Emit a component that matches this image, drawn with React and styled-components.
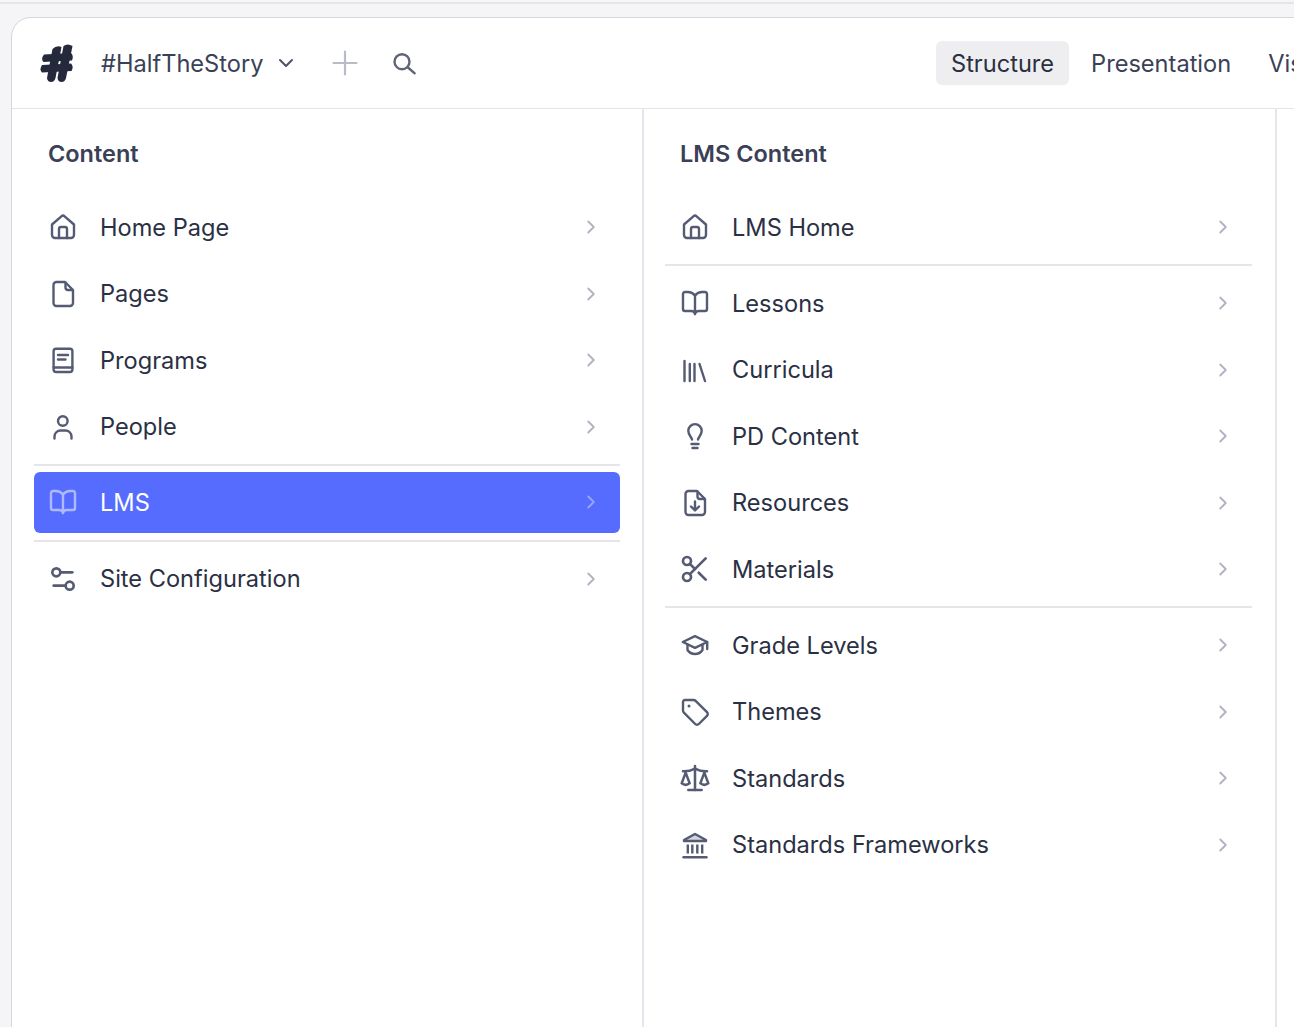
import React from 'react';
import styled, { createGlobalStyle } from 'styled-components';
import { Settings2, Scissors, Scale, ChevronRight, ChevronDown } from 'lucide-react';

const Global = createGlobalStyle`
  html, body { margin: 0; height: 100%; overflow: hidden; background: #f5f5f7; }
  body { font-family: Inter, "Liberation Sans", sans-serif; -webkit-font-smoothing: antialiased; }
`;

const TopLine = styled.div`
  margin-top: 2px;
  height: 2px;
  background: #e5e5e7;
`;

const Card = styled.div`
  margin: 13px 0 0 11px;
  width: 1500px;
  height: 1100px;
  background: #fff;
  border: 1px solid #d5d5dd;
  border-radius: 20px 0 0 0;
`;

const Header = styled.header`
  height: 90px;
  display: flex;
  align-items: center;
  padding-left: 28px;
  border-bottom: 1px solid #e4e4ea;
`;

const LeftGroup = styled.div`
  flex: 0 0 896px;
  display: flex;
  align-items: center;
`;

const Logo = styled.svg`
  width: 34px;
  height: 40px;
  margin-right: 27px;
  color: #242a3b;
`;

const Brand = styled.span`
  font-size: 23.6px;
  font-weight: 425;
  color: #3a4156;
`;

const BrandCaret = styled.span`
  display: flex;
  margin: 0 31px 0 11px;
  color: #4d5367;
`;

const PlusIcon = styled.svg`
  width: 32px;
  height: 32px;
  margin-right: 29px;
  color: #b9bbc9;
`;

const SearchIcon = styled.svg`
  width: 32px;
  height: 32px;
  color: #5f6476;
`;

const Tabs = styled.nav`
  display: flex;
  gap: 7px;
`;

const Tab = styled.span`
  height: 44px;
  padding: 0 15px;
  display: flex;
  align-items: center;
  border-radius: 6px;
  font-size: 23.6px;
  font-weight: 425;
  white-space: nowrap;
  color: ${p => (p.$active ? '#2a2f42' : '#3a4156')};
  background: ${p => (p.$active ? '#eeeef0' : 'transparent')};
`;

const Columns = styled.div`
  display: grid;
  grid-template-columns: 632px 633px 1fr;
  height: 1000px;
`;

const Title = styled.h2`
  margin: 0;
  height: 88px;
  padding: 0 14px;
  display: flex;
  align-items: center;
  font-size: 23.5px;
  font-weight: 560;
  color: #3a4056;
`;

const List = styled.div`
  display: flex;
  flex-direction: column;
  gap: 6.5px;
`;

const Row = styled.div`
  height: ${p => (p.$active ? 61 : 60)}px;
  margin-top: ${p => (p.$active ? -1 : 0)}px;
  display: flex;
  align-items: center;
  gap: 21px;
  padding: 0 18px 0 13px;
  border-radius: 6px;
  font-size: 23.6px;
  font-weight: 425;
  color: ${p => (p.$active ? '#fff' : '#2b3044')};
  background: ${p => (p.$active ? '#556cff' : 'transparent')};
`;

const Column = styled.section`
  padding: 0 ${p => p.$right}px 0 ${p => p.$left}px;
  border-right: 2px solid #e5e5ec;

  ${Title} { padding-left: ${p => 14 + p.$inset}px; }
  ${Row} { padding-left: ${p => 13 + p.$inset}px; }
`;

const IconBox = styled.span`
  display: flex;
  color: ${p => (p.$active ? '#aeb9ff' : '#545b73')};
`;

const Label = styled.span`
  flex: 1;
`;

const Chevron = styled.span`
  display: flex;
  color: ${p => (p.$active ? '#98a6ff' : '#b0b2c0')};
`;

const Divider = styled.hr`
  margin: 0.5px 0;
  border: 0;
  height: 2px;
  background: #e5e5ea;
`;

const Glyph = ({ children }) => (
  <svg width="32" height="32" viewBox="0 0 32 32" fill="none" stroke="currentColor" strokeWidth="2.4" strokeLinecap="round" strokeLinejoin="round">
    {children}
  </svg>
);

const Home = () => (
  <Glyph>
    <path d="M5 13.500 14.400 5.300a2.400 2.400 0 0 1 3.200 0L27 13.500V24a3 3 0 0 1-3 3H8a3 3 0 0 1-3-3Z" />
    <path d="M12 27v-9a2 2 0 0 1 2-2h4a2 2 0 0 1 2 2v9" />
  </Glyph>
);

const Page = () => (
  <Glyph>
    <path d="M9.500 4H18l8 8v13a3 3 0 0 1-3 3H9.500a3 3 0 0 1-3-3V7a3 3 0 0 1 3-3Z" />
    <path d="M18.500 4.500V9.500a2.500 2.500 0 0 0 2.500 2.500h4.500" />
  </Glyph>
);

const Program = () => (
  <Glyph>
    <rect x="6.600" y="4.800" width="18.800" height="23.200" rx="2.500" />
    <path d="M6.600 23.500h18.800M11 11h10M11 15.500h7.500" />
  </Glyph>
);

const Person = () => (
  <Glyph>
    <circle cx="15.800" cy="10" r="4.800" />
    <path d="M7.500 27.500v-2a6 6 0 0 1 6-6h5a6 6 0 0 1 6 6v2" />
  </Glyph>
);

const OpenBook = () => (
  <Glyph>
    <path d="M16 8.500C14 6 12 5 9 5H6a2 2 0 0 0-2 2v15a2 2 0 0 0 2 2h6c2 0 4 1 4 3 0-2 2-3 4-3h6a2 2 0 0 0 2-2V7a2 2 0 0 0-2-2h-3c-3 0-5 1-7 3.500Z" />
    <path d="M16 8.500V27" />
  </Glyph>
);

const Shelf = () => (
  <Glyph>
    <path d="M5.500 7v20M10.800 10v17M15.500 10v17M20.500 10 26 27" />
  </Glyph>
);

const Bulb = () => (
  <Glyph>
    <path d="M13 19.500c0-2-3.700-4-3.700-8.700a6.700 6.700 0 0 1 13.400 0c0 4.700-3.700 6.700-3.700 8.700" />
    <path d="M12.500 24h7M13.500 28h5" />
  </Glyph>
);

const FileDownload = () => (
  <Glyph>
    <path d="M9.500 4H18l8 8v13a3 3 0 0 1-3 3H9.500a3 3 0 0 1-3-3V7a3 3 0 0 1 3-3Z" />
    <path d="M18.500 4.500V9.500a2.500 2.500 0 0 0 2.500 2.500h4.500" />
    <path d="M16 14.500V23M12 19.500l4 4 4-4" />
  </Glyph>
);

const Cap = () => (
  <Glyph>
    <path d="M3.800 13 16 7.200 28.200 13 16 18.800Z" />
    <path d="M8.500 15.500v5.500c2 3 5 4 7.500 4s5.500-1 7.500-4v-5.500" />
    <path d="M28.200 13v7" />
  </Glyph>
);

const Label2 = () => (
  <Glyph>
    <path d="M6 4h8.500a3 3 0 0 1 2.100.9L28 16.200a2.500 2.500 0 0 1 0 3.600L19.800 28a2.500 2.500 0 0 1-3.600 0L4.900 16.700a3 3 0 0 1-.9-2.100V6a2 2 0 0 1 2-2Z" />
    <circle cx="10" cy="10" r="1.500" fill="currentColor" stroke="none" />
  </Glyph>
);

const Bank = () => (
  <Glyph>
    <path d="M5 12h22v-1L16 5 5 11Z" fill="currentColor" fillOpacity="0.25" />
    <path d="M8.800 15.500v9M13.300 15.500v9M18.300 15.500v9M23.200 15.500v9" strokeLinecap="butt" />
    <path d="M4.500 28.300h23" />
  </Glyph>
);

const Sliders = () => <Settings2 size={32} strokeWidth={2} />;
const Cut = () => <Scissors size={32} strokeWidth={2} />;
const Balance = () => <Scale size={32} strokeWidth={1.900} />;

const Item = ({ icon: Icon, label, active }) => (
  <Row $active={active}>
    <IconBox $active={active}><Icon /></IconBox>
    <Label>{label}</Label>
    <Chevron $active={active}><ChevronRight size={22} strokeWidth={2} /></Chevron>
  </Row>
);

export default function App() {
  return (
    <>
      <Global />
      <TopLine />
      <Card>
        <Header>
          <LeftGroup>
            <Logo viewBox="0 0 34 40" fill="currentColor">
              <path d="M12.500 6q4-4 9-2L15.500 35q-1 4-4.500 4t-4-4Z" />
              <path d="M23.500 3q4-3 9 0L26 35q-1 4-4.500 4t-4-4Z" />
              <path d="M4 11.500 31 10q3 3 1 7.500L3.500 19q-3-3 .5-7.500Z" />
              <path d="M2 22 31 20.500q3 3 .5 7.500L2 29.500q-3-3 0-7.500Z" />
            </Logo>
            <Brand>#HalfTheStory</Brand>
            <BrandCaret><ChevronDown size={24} strokeWidth={2} /></BrandCaret>
            <PlusIcon viewBox="0 0 32 32" fill="none" stroke="currentColor" strokeWidth="2.200" strokeLinecap="round">
              <path d="M16 4.500v23M4.500 16h23" />
            </PlusIcon>
            <SearchIcon viewBox="0 0 32 32" fill="none" stroke="currentColor" strokeWidth="2.400" strokeLinecap="round">
              <circle cx="12" cy="14.700" r="7.500" />
              <path d="M18 20.500l6.700 5.800" />
            </SearchIcon>
          </LeftGroup>
          <Tabs>
            <Tab $active>Structure</Tab>
            <Tab>Presentation</Tab>
            <Tab>Visibility</Tab>
          </Tabs>
        </Header>
        <Columns>
          <Column $left={22} $right={22} $inset={0}>
            <Title>Content</Title>
            <List>
              <Item icon={Home} label="Home Page" />
              <Item icon={Page} label="Pages" />
              <Item icon={Program} label="Programs" />
              <Item icon={Person} label="People" />
              <Divider />
              <Item icon={OpenBook} label="LMS" active />
              <Divider />
              <Item icon={Sliders} label="Site Configuration" />
            </List>
          </Column>
          <Column $left={21} $right={23} $inset={1}>
            <Title>LMS Content</Title>
            <List>
              <Item icon={Home} label="LMS Home" />
              <Divider />
              <Item icon={OpenBook} label="Lessons" />
              <Item icon={Shelf} label="Curricula" />
              <Item icon={Bulb} label="PD Content" />
              <Item icon={FileDownload} label="Resources" />
              <Item icon={Cut} label="Materials" />
              <Divider />
              <Item icon={Cap} label="Grade Levels" />
              <Item icon={Label2} label="Themes" />
              <Item icon={Balance} label="Standards" />
              <Item icon={Bank} label="Standards Frameworks" />
            </List>
          </Column>
        </Columns>
      </Card>
    </>
  );
}
